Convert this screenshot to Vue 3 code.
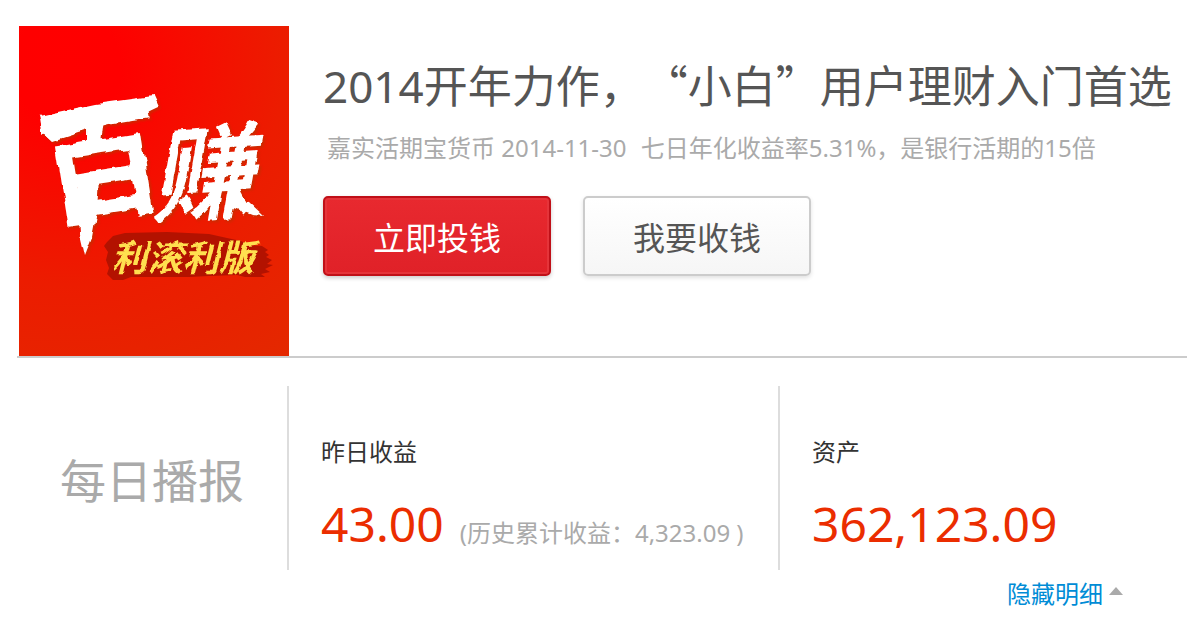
<template>
  <main class="page">

    <!-- Product -->
    <section class="hero">
      <svg class="poster" width="270" height="330" viewBox="0 0 270 330" role="img" aria-label="百赚利滚利版">
        <defs>
          <radialGradient id="poster-bg" gradientUnits="userSpaceOnUse" cx="48" cy="42" r="360">
            <stop offset="0" stop-color="#ff0000" />
            <stop offset="0.15" stop-color="#fe0000" />
            <stop offset="0.6" stop-color="#ec1c00" />
            <stop offset="1" stop-color="#e42800" />
          </radialGradient>
          <!-- Ragged edges of a dry brush -->
          <filter id="rough" x="-10%" y="-10%" width="120%" height="120%">
            <feTurbulence type="fractalNoise" baseFrequency="0.07" numOctaves="2" seed="4" />
            <feDisplacementMap in="SourceGraphic" scale="7" xChannelSelector="R" yChannelSelector="G" />
          </filter>
          <filter id="rough-fine" x="-10%" y="-10%" width="120%" height="120%">
            <feTurbulence type="fractalNoise" baseFrequency="0.12" numOctaves="2" seed="7" />
            <feDisplacementMap in="SourceGraphic" scale="4" xChannelSelector="R" yChannelSelector="G" />
          </filter>
        </defs>
        <rect width="270" height="330" fill="url(#poster-bg)" />

        <!-- Brush smear behind the edition name -->
        <path
          fill="#b31200"
          d="M88 216 L94 210 L106 207 L148 206 L190 208 L208 212 L222 215 L230 219 L243 220
             L249 224 L246 226 L250 229 L247 231 L253 234 L248 238 L254 239 L246 243 L251 246
             L242 248 L246 251 L226 251 L218 249 L190 250 L170 251 L112 251 L104 254 L94 254
             L88 248 L90 242 L87 234 L89 226 L85 220 Z"
        />

        <g class="brush">
          <g filter="url(#rough)">
            <text class="brush-big" x="20" y="184" transform="rotate(-9 82 135)">百</text>
            <!-- Brush heads and tails running out of the name -->
            <path d="M20 90 L76 78 L134 70 L139 81 L118 91 L78 101 L34 115 L24 106 Z" />
            <path d="M58 150 L80 152 L78 186 L73 212 L66 230 L61 208 Z" />
          </g>
          <g filter="url(#rough-fine)">
            <text class="brush-small" x="130" y="186" transform="rotate(-4 180 150)">赚</text>
            <path d="M212 172 L230 176 L245 190 L233 189 L212 181 Z" />
          </g>
        </g>
        <text class="edition" x="92" y="245" filter="url(#rough-fine)">利滚利版</text>
      </svg>

      <div class="intro">
        <h1 class="title">2014开年力作，<span class="quote">“</span>小白<span class="quote">”</span>用户理财入门首选</h1>
        <p class="summary">嘉实活期宝货币 <time class="date" datetime="2014-11-30">2014-11-30</time> 七日年化收益率5.31%，是银行活期的15倍</p>
        <div class="actions">
          <button class="btn primary" type="button">立即投钱</button>
          <button class="btn" type="button">我要收钱</button>
        </div>
      </div>
    </section>

    <!-- Daily report -->
    <section class="report">
      <h2 class="report-title">每日播报</h2>
      <div class="stat" v-for="s in stats" :key="s.label">
        <h3 class="label">{{ s.label }}</h3>
        <p class="figures">
          <span class="value">{{ s.value }}</span>
          <span v-if="s.note" class="note">{{ s.note }}</span>
        </p>
      </div>
    </section>

    <div class="footer">
      <a class="toggle" href="#">隐藏明细<span class="arrow"></span></a>
    </div>

  </main>
</template>

<script setup>
const stats = [
  { label: '昨日收益', value: '43.00', note: '(历史累计收益：4,323.09 )' },
  { label: '资产', value: '362,123.09', note: '' },
]
</script>

<style>
body {
  background: #ffffff;
}
</style>

<style scoped>
.page {
  padding: 26px 17px 16px;
  font-family: 'Noto Sans', 'Noto Sans CJK SC', sans-serif;
  color: #333333;
}

/* ── Product ── */
.hero {
  display: flex;
  align-items: flex-start;
  gap: 34px;
  padding-left: 2px;
  border-bottom: 2px solid #cccccc;
}

.poster {
  display: block;
  flex-shrink: 0;
}

.brush {
  fill: #ffffff;
  filter: drop-shadow(2px 2px 1px rgba(190, 50, 0, 0.7));
}

.brush-big,
.brush-small,
.edition {
  font-family: 'Noto Sans CJK SC', sans-serif;
  font-weight: 700;
}

.brush-big {
  font-size: 124px;
}

.brush-small {
  font-size: 104px;
  font-style: italic;
}

.edition {
  font-size: 36px;
  font-style: italic;
  fill: #ffdf50;
}

.intro {
  flex: 1;
  min-width: 0;
  padding-top: 28px;
}

.title {
  margin: 0;
  font-size: 44px;
  line-height: 60px;
  font-weight: 400;
  color: #555555;
  text-spacing-trim: space-all;
}

.quote {
  font-family: 'Noto Sans CJK SC', sans-serif;
}

.summary {
  margin: 16px 0 0;
  padding-left: 4px;
  font-size: 24px;
  line-height: 32px;
  color: #aaaaaa;
}

.date {
  margin-right: 8px;
}

/* ── Buttons ── */
.actions {
  display: flex;
  gap: 32px;
  margin-top: 32px;
}

.btn {
  width: 228px;
  height: 80px;
  padding: 0;
  border: 2px solid #cccccc;
  border-radius: 5px;
  background: linear-gradient(#ffffff, #f6f6f6);
  box-shadow: 0 2px 4px rgba(0, 0, 0, 0.12);
  font-family: inherit;
  font-size: 32px;
  color: #555555;
  cursor: pointer;
}

.btn.primary {
  border-color: #c01018;
  background: linear-gradient(#e8292f, #e02128);
  box-shadow: inset 0 0 0 2px #e5343a, 0 2px 4px rgba(0, 0, 0, 0.2);
  color: #ffffff;
}

/* ── Daily report ── */
.report {
  display: flex;
  margin-top: 28px;
}

.report-title {
  display: flex;
  align-items: center;
  justify-content: center;
  width: 270px;
  height: 184px;
  margin: 0;
  font-size: 46px;
  font-weight: 400;
  color: #aaaaaa;
}

.stat {
  flex: 1;
  padding: 50px 0 0 32px;
  border-left: 2px solid #dddddd;
}

.stat:nth-child(2) {
  flex: 0 0 457px;
}

.label {
  margin: 0;
  font-size: 24px;
  line-height: 32px;
  font-weight: 400;
}

.figures {
  display: flex;
  align-items: baseline;
  gap: 16px;
  margin: 24px 0 0;
  white-space: nowrap;
}

.value {
  font-size: 48px;
  line-height: 64px;
  color: #eb2d00;
}

.note {
  font-size: 24px;
  color: #aaaaaa;
}

/* ── Toggle ── */
.footer {
  display: flex;
  justify-content: flex-end;
  padding: 8px 64px 0 0;
}

.toggle {
  display: flex;
  align-items: center;
  gap: 6px;
  font-size: 24px;
  line-height: 32px;
  color: #008cd6;
  text-decoration: none;
}

.arrow {
  margin-bottom: 6px;
  border: 7px solid transparent;
  border-top: 0;
  border-bottom: 8px solid #aaaaaa;
}
</style>
